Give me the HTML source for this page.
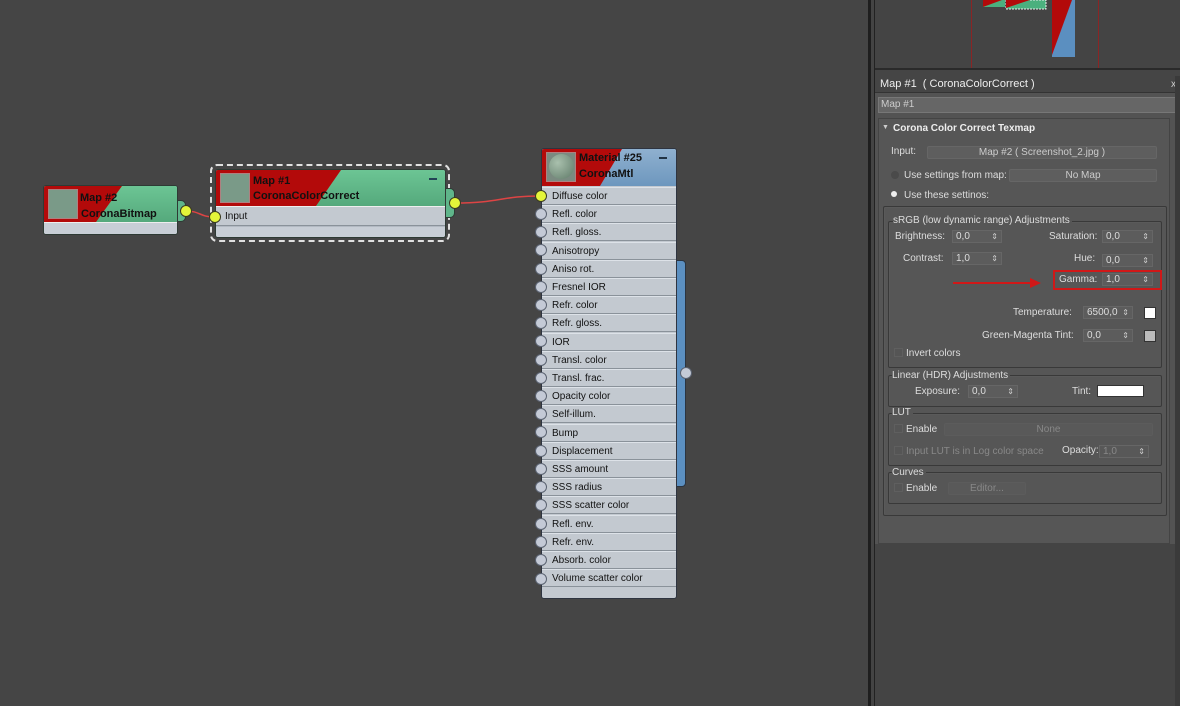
<!DOCTYPE html>
<html><head><meta charset="utf-8"><style>
*{margin:0;padding:0;box-sizing:border-box}
body{width:1180px;height:706px;background:#454545;position:relative;overflow:hidden;font-family:"Liberation Sans",sans-serif}
.a{position:absolute}
.t{position:absolute;font-size:10px;color:#ddd;white-space:nowrap}
.spin{position:absolute;height:13px;background:#5c5c5c;border:1px solid #666;font-size:10px;color:#ddd;padding-left:3px;line-height:12px}
.spin:after{content:"⇕";position:absolute;right:3px;top:0;font-size:8px;color:#ccc}
.grp{position:absolute;border:1px solid #393939;box-shadow:inset 1px 1px 0 #5a5a5a;border-radius:2px}
.btn{position:absolute;height:13px;background:#5e5e5e;border:1px solid #666;border-radius:2px;font-size:10px;color:#ccc;text-align:center;line-height:12px}
.row{position:absolute;left:0;width:134px;height:18px;border-bottom:1px solid #8a929a;border-top:1px solid #dde2e8;background:#c3c9d0;font-size:10px;color:#111;padding-left:10px;line-height:18px}
.sock{position:absolute;width:12px;height:12px;border-radius:50%;background:#c4cad6;border:1px solid #5a6270}
.ys{position:absolute;width:12px;height:12px;border-radius:50%;background:#e4f53a;border:1px solid #3a3a20}
.nt{position:absolute;font-size:11px;font-weight:bold;color:#111;white-space:nowrap}
.cb{display:inline-block;width:9px;height:9px;background:#555;border:1px solid #5f5f5f;vertical-align:-1px;margin-right:3px}
</style></head><body>

<svg class="a" style="left:0;top:0" width="870" height="706">
<path d="M186 211 C200 211 200 217 214 217" stroke="#d44" stroke-width="1.5" fill="none"/>
<path d="M455 203 C500 203 500 196 541 196" stroke="#d44" stroke-width="1.5" fill="none"/>
</svg>

<div class="a" style="left:43px;top:185px;width:135px;height:50px;background:#a8b0b8;border:1px solid #2e3a34;border-radius:3px;overflow:hidden">
  <div class="a" style="left:0;top:0;width:135px;height:36px;background:linear-gradient(180deg,#6cc594,#55a97c)"></div>
  <svg class="a" style="left:0;top:0" width="135" height="36"><polygon points="0,0 78,0 52,36 0,36" fill="#b30a0a"/></svg>
  <div class="a" style="left:4px;top:3px;width:30px;height:30px;background:#7a9a88;border:1px solid #b08080"></div>
  <div class="nt" style="left:36px;top:6px">Map #2</div>
  <div class="nt" style="left:37px;top:22px">CoronaBitmap</div>
  <div class="a" style="left:0;top:36px;width:135px;height:14px;background:#c8ced6;border-top:1px solid #eee"></div>
</div>
<div class="a" style="left:177px;top:200px;width:9px;height:22px;background:#5fb58a;border-radius:0 5px 5px 0;border:1px solid #2e3a34"></div>
<div class="ys" style="left:180px;top:205px"></div>

<div class="a" style="left:210px;top:164px;width:240px;height:78px;border:2px dashed #e0e0e0;border-radius:7px"></div>
<div class="a" style="left:215px;top:169px;width:231px;height:69px;background:#b2b9c2;border:1px solid #2e3a34;border-radius:3px;overflow:hidden">
  <div class="a" style="left:0;top:0;width:231px;height:36px;background:linear-gradient(180deg,#6cc594,#55a97c)"></div>
  <svg class="a" style="left:0;top:0" width="231" height="36"><polygon points="0,0 125,0 100,36 0,36" fill="#b30a0a"/></svg>
  <div class="a" style="left:4px;top:3px;width:30px;height:30px;background:#7a9a88;border:1px solid #b08080"></div>
  <div class="nt" style="left:37px;top:5px">Map #1</div>
  <div class="nt" style="left:37px;top:20px">CoronaColorCorrect</div>
  <div class="a" style="left:213px;top:8px;width:8px;height:2px;background:#245"></div>
  <div class="a" style="left:0;top:36px;width:231px;height:20px;background:#c3c9d0;border-top:1px solid #eee;border-bottom:1px solid #8a929a;font-size:10px;color:#111;padding-left:9px;line-height:20px">Input</div>
  <div class="a" style="left:0;top:57px;width:231px;height:12px;background:#c8ced6"></div>
</div>
<div class="ys" style="left:209px;top:211px"></div>
<div class="a" style="left:445px;top:188px;width:10px;height:30px;background:#5fb58a;border-radius:0 5px 5px 0;border:1px solid #2e3a34"></div>
<div class="ys" style="left:449px;top:197px"></div>

<div class="a" style="left:675px;top:260px;width:11px;height:227px;background:#5b8fc0;border:1px solid #2a3440;border-radius:0 4px 4px 0"></div>
<div class="sock" style="left:680px;top:367px"></div>
<div class="a" style="left:541px;top:148px;width:136px;height:451px;background:#c3c9d0;border:1px solid #2e3440;border-radius:3px;overflow:hidden">
  <div class="a" style="left:0;top:0;width:136px;height:37px;background:linear-gradient(180deg,#8fb0cf,#6d97be)"></div>
  <svg class="a" style="left:0;top:0" width="136" height="37"><polygon points="0,0 80,0 58,37 0,37" fill="#b30a0a"/></svg>
  <div class="a" style="left:4px;top:3px;width:30px;height:30px;background:#7a8a80;border:1px solid #b08080"></div>
  <div class="a" style="left:7px;top:5px;width:25px;height:25px;border-radius:50%;background:radial-gradient(circle at 35% 35%,#a9c0ad,#5f7a68)"></div>
  <div class="nt" style="left:37px;top:3px">Material #25</div>
  <div class="nt" style="left:37px;top:19px">CoronaMtl</div>
  <div class="a" style="left:117px;top:8px;width:8px;height:2px;background:#234"></div>
  <div class="row" style="top:38px">Diffuse color</div>
  <div class="row" style="top:56.2px">Refl. color</div>
  <div class="row" style="top:74.4px">Refl. gloss.</div>
  <div class="row" style="top:92.6px">Anisotropy</div>
  <div class="row" style="top:110.8px">Aniso rot.</div>
  <div class="row" style="top:129px">Fresnel IOR</div>
  <div class="row" style="top:147.2px">Refr. color</div>
  <div class="row" style="top:165.4px">Refr. gloss.</div>
  <div class="row" style="top:183.6px">IOR</div>
  <div class="row" style="top:201.8px">Transl. color</div>
  <div class="row" style="top:220px">Transl. frac.</div>
  <div class="row" style="top:238.2px">Opacity color</div>
  <div class="row" style="top:256.4px">Self-illum.</div>
  <div class="row" style="top:274.6px">Bump</div>
  <div class="row" style="top:292.8px">Displacement</div>
  <div class="row" style="top:311px">SSS amount</div>
  <div class="row" style="top:329.2px">SSS radius</div>
  <div class="row" style="top:347.4px">SSS scatter color</div>
  <div class="row" style="top:365.6px">Refl. env.</div>
  <div class="row" style="top:383.8px">Refr. env.</div>
  <div class="row" style="top:402px">Absorb. color</div>
  <div class="row" style="top:420.2px">Volume scatter color</div>
</div>
<div class="ys" style="left:535px;top:190px"></div>
<div class="sock" style="left:535px;top:208px"></div><div class="sock" style="left:535px;top:226px"></div>
<div class="sock" style="left:535px;top:244px"></div><div class="sock" style="left:535px;top:263px"></div>
<div class="sock" style="left:535px;top:281px"></div><div class="sock" style="left:535px;top:299px"></div>
<div class="sock" style="left:535px;top:317px"></div><div class="sock" style="left:535px;top:335px"></div>
<div class="sock" style="left:535px;top:354px"></div><div class="sock" style="left:535px;top:372px"></div>
<div class="sock" style="left:535px;top:390px"></div><div class="sock" style="left:535px;top:408px"></div>
<div class="sock" style="left:535px;top:426px"></div><div class="sock" style="left:535px;top:445px"></div>
<div class="sock" style="left:535px;top:463px"></div><div class="sock" style="left:535px;top:481px"></div>
<div class="sock" style="left:535px;top:499px"></div><div class="sock" style="left:535px;top:518px"></div>
<div class="sock" style="left:535px;top:536px"></div><div class="sock" style="left:535px;top:554px"></div>
<div class="sock" style="left:535px;top:573px"></div>

<div class="a" style="left:868px;top:0;width:3px;height:706px;background:#1e1e1e"></div>
<div class="a" style="left:871px;top:0;width:3px;height:706px;background:#444"></div>
<div class="a" style="left:874px;top:0;width:1px;height:706px;background:#222"></div>

<div class="a" style="left:875px;top:0;width:305px;height:70px;background:#444;border-bottom:2px solid #2a2a2a"></div>
<div class="a" style="left:971px;top:0;width:1px;height:68px;background:#8a2525"></div>
<div class="a" style="left:1098px;top:0;width:1px;height:68px;background:#8a2525"></div>
<svg class="a" style="left:980px;top:0" width="100" height="60">
<rect x="3" y="0" width="22" height="7" fill="#4bb07e"/><polygon points="3,0 22,0 3,7" fill="#b30a0a"/>
<rect x="26" y="0" width="40" height="9" fill="#4bb07e" stroke="#eee" stroke-dasharray="2,1"/><polygon points="26,0 50,0 26,8" fill="#b30a0a"/>
<rect x="72" y="0" width="23" height="57" fill="#5b8fc0"/><polygon points="72,0 92,0 72,55" fill="#b30a0a"/>
</svg>

<div class="a" style="left:875px;top:76px;width:305px;height:468px;background:#535353"></div>
<div class="a" style="left:875px;top:76px;width:305px;height:17px;background:#454545;border-bottom:1px solid #333"></div>
<div class="t" style="left:880px;top:78px;font-size:11px;color:#eee">Map #1 &nbsp;( CoronaColorCorrect )</div>
<div class="t" style="left:1171px;top:79px;font-size:10px;color:#ccc">x</div>
<div class="a" style="left:878px;top:97px;width:300px;height:16px;background:#666;border:1px solid #777"></div>
<div class="t" style="left:881px;top:99px;color:#ccc">Map #1</div>
<div class="a" style="left:878px;top:118px;width:292px;height:426px;background:#565656;border:1px solid #444"></div>
<div class="t" style="left:882px;top:124px;font-size:7px;color:#ccc">▼</div>
<div class="t" style="left:893px;top:123px;font-weight:bold;color:#eee">Corona Color Correct Texmap</div>
<div class="t" style="left:891px;top:146px">Input:</div>
<div class="btn" style="left:927px;top:146px;width:230px">Map #2 ( Screenshot_2.jpg )</div>
<div class="a" style="left:891px;top:171px;width:8px;height:8px;border-radius:50%;background:#4a4a4a"></div>
<div class="t" style="left:904px;top:170px">Use settings from map:</div>
<div class="btn" style="left:1009px;top:169px;width:148px">No Map</div>
<div class="a" style="left:891px;top:191px;width:6px;height:6px;border-radius:50%;background:#eee"></div>
<div class="t" style="left:904px;top:190px">Use these settinos:</div>

<div class="grp" style="left:883px;top:206px;width:284px;height:310px"></div>
<div class="grp" style="left:888px;top:221px;width:274px;height:147px"></div>
<div class="t" style="left:893px;top:215px;background:#565656;padding-right:2px">sRGB (low dynamic range) Adjustments</div>
<div class="t" style="left:895px;top:231px">Brightness:</div><div class="spin" style="left:952px;top:230px;width:50px">0,0</div>
<div class="t" style="left:1049px;top:231px">Saturation:</div><div class="spin" style="left:1102px;top:230px;width:51px">0,0</div>
<div class="t" style="left:903px;top:253px">Contrast:</div><div class="spin" style="left:952px;top:252px;width:50px">1,0</div>
<div class="t" style="left:1074px;top:253px">Hue:</div><div class="spin" style="left:1102px;top:254px;width:51px">0,0</div>
<div class="a" style="left:1053px;top:270px;width:109px;height:20px;border:2px solid #d01818"></div>
<div class="t" style="left:1059px;top:274px">Gamma:</div><div class="spin" style="left:1102px;top:273px;width:51px">1,0</div>
<div class="a" style="left:953px;top:282px;width:82px;height:2px;background:#d01818"></div>
<svg class="a" style="left:1030px;top:278px" width="12" height="10"><polygon points="0,0 11,5 0,10" fill="#d01818"/></svg>
<div class="t" style="left:1013px;top:307px">Temperature:</div><div class="spin" style="left:1083px;top:306px;width:50px">6500,0</div>
<div class="a" style="left:1144px;top:307px;width:12px;height:12px;background:#fff;border:1px solid #333"></div>
<div class="t" style="left:982px;top:330px">Green-Magenta Tint:</div><div class="spin" style="left:1083px;top:329px;width:50px">0,0</div>
<div class="a" style="left:1144px;top:330px;width:12px;height:12px;background:#bbb;border:1px solid #333"></div>
<div class="t" style="left:894px;top:348px"><span class="cb"></span>Invert colors</div>

<div class="grp" style="left:888px;top:375px;width:274px;height:32px"></div>
<div class="t" style="left:892px;top:370px;background:#565656;padding-right:2px">Linear (HDR) Adjustments</div>
<div class="t" style="left:915px;top:386px">Exposure:</div><div class="spin" style="left:968px;top:385px;width:50px">0,0</div>
<div class="t" style="left:1072px;top:386px">Tint:</div>
<div class="a" style="left:1097px;top:385px;width:47px;height:12px;background:#fff;border:1px solid #333"></div>

<div class="grp" style="left:888px;top:413px;width:274px;height:53px"></div>
<div class="t" style="left:892px;top:407px;background:#565656;padding-right:2px">LUT</div>
<div class="t" style="left:894px;top:424px"><span class="cb"></span>Enable</div>
<div class="btn" style="left:944px;top:423px;width:209px;background:#595959;color:#888;border-color:#5c5c5c">None</div>
<div class="t" style="left:894px;top:446px;color:#888"><span class="cb"></span>Input LUT is in Log color space</div>
<div class="t" style="left:1062px;top:445px">Opacity:</div><div class="spin" style="left:1099px;top:445px;width:50px;color:#888;background:#585858">1,0</div>

<div class="grp" style="left:888px;top:472px;width:274px;height:32px"></div>
<div class="t" style="left:892px;top:467px;background:#565656;padding-right:2px">Curves</div>
<div class="t" style="left:894px;top:483px"><span class="cb"></span>Enable</div>
<div class="btn" style="left:948px;top:482px;width:78px;background:#595959;color:#888;border-color:#5c5c5c">Editor...</div>

<div class="a" style="left:875px;top:544px;width:300px;height:162px;background:#444"></div>
<div class="a" style="left:1175px;top:76px;width:5px;height:630px;background:#3a3a3a"></div>
</body></html>
